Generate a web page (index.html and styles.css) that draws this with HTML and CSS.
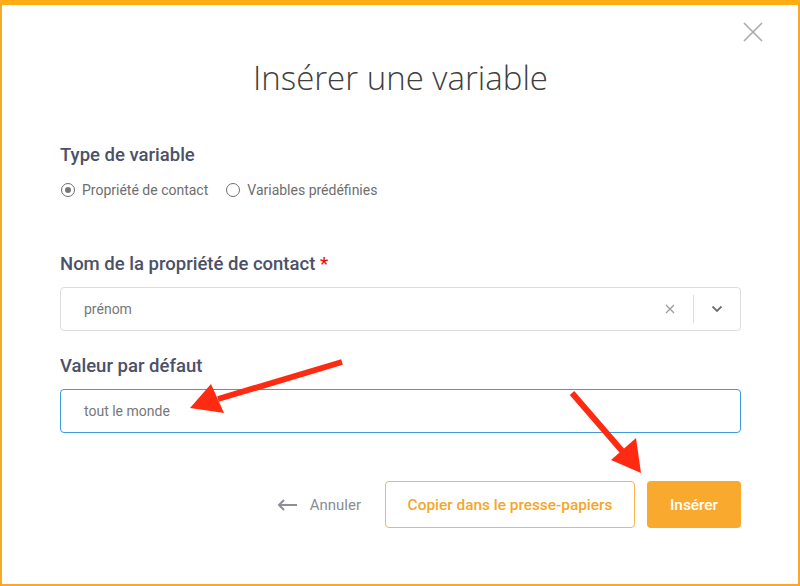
FILE: index.html
```html
<!DOCTYPE html>
<html lang="fr">
<head>
    <meta charset="UTF-8">
    <title>Insérer une variable</title>
    <link rel="stylesheet" href="styles.css">
</head>
<body>
    <div class="modal">
        <button class="close" aria-label="Fermer">
            <svg width="20" height="20" viewBox="0 0 20 20"><path d="M1 1 L19 19 M19 1 L1 19" stroke="#a9a9a9" stroke-width="1.6" fill="none"/></svg>
        </button>

        <h1 class="title">Insérer une variable</h1>

        <div class="label first">Type de variable</div>
        <div class="radios">
            <label class="radio"><span class="dot checked"></span>Propriété de contact</label>
            <label class="radio"><span class="dot"></span>Variables prédéfinies</label>
        </div>

        <div class="label spaced">Nom de la propriété de contact <span class="req">*</span></div>
        <div class="select">
            <span class="select-value">prénom</span>
            <span class="select-clear">
                <svg width="10" height="10" viewBox="0 0 10 10"><path d="M1 1 L9 9 M9 1 L1 9" stroke="#9a9a9a" stroke-width="1.2" fill="none"/></svg>
            </span>
            <span class="select-sep"></span>
            <span class="select-arrow">
                <svg width="12" height="8" viewBox="0 0 12 8"><path d="M1.5 1.5 L6 6 L10.5 1.5" stroke="#6b6f7a" stroke-width="1.8" fill="none"/></svg>
            </span>
        </div>

        <div class="label">Valeur par défaut</div>
        <div class="input">tout le monde</div>

        <div class="actions">
            <button class="cancel">
                <svg width="21" height="12" viewBox="0 0 21 12"><path d="M20 6 H2 M7 1 L2 6 L7 11" stroke="#8d8f96" stroke-width="2" fill="none"/></svg>
                Annuler
            </button>
            <button class="btn-outline">Copier dans le presse-papiers</button>
            <button class="btn-primary">Insérer</button>
        </div>

        <svg class="annotations" width="800" height="586" viewBox="0 0 800 586">
            <path d="M342 362 L218 399" stroke="#ff2a12" stroke-width="6" fill="none"/>
            <polygon points="190,408 211,384 224,413" fill="#ff2a12"/>
            <path d="M572 393 L623 452" stroke="#ff2a12" stroke-width="6" fill="none"/>
            <polygon points="641,473 611,460 636,438" fill="#ff2a12"/>
        </svg>
    </div>
</body>
</html>
```

FILE: styles.css
```css
* {
    box-sizing: border-box;
}
body {
    margin: 0;
    font-family: Roboto, "Liberation Sans", sans-serif;
    background: #fff;
}
.modal {
    position: relative;
    width: 800px;
    height: 586px;
    border: 2px solid #f8a929;
    border-top: 5px solid #ffad14;
    padding: 0 57px 0 58px;
    background: #fff;
}
.close {
    position: absolute;
    top: 17px;
    right: 35px;
    border: none;
    background: none;
    padding: 0;
    width: 20px;
    height: 20px;
}
.title {
    margin: 53px 0 0;
    text-align: center;
    font-family: "Open Sans", sans-serif;
    font-weight: 300;
    font-size: 33px;
    line-height: 40px;
    color: #404040;
}
.label {
    font-size: 18.5px;
    font-weight: 500;
    line-height: 24px;
    color: #4b5168;
    margin-top: 23px;
}
.label.first {
    margin-top: 45px;
}
.label.spaced {
    margin-top: 52px;
}
.req {
    color: #e8120c;
}
.radios {
    display: flex;
    gap: 17px;
    margin-top: 13px;
    height: 20px;
    align-items: center;
}
.radio {
    display: flex;
    align-items: center;
    font-size: 14px;
    color: #6e6e6e;
}
.dot {
    width: 14px;
    height: 14px;
    border: 1.5px solid #6f6f6f;
    border-radius: 50%;
    margin: 0 7px 0 1px;
    position: relative;
}
.dot.checked::after {
    content: "";
    position: absolute;
    left: 2.5px;
    top: 2.5px;
    width: 6px;
    height: 6px;
    border-radius: 50%;
    background: #777;
}
.select {
    margin-top: 11px;
    height: 44px;
    border: 1px solid #dcdde0;
    border-radius: 4px;
    display: flex;
    align-items: center;
    padding-left: 23px;
}
.select-value,
.input {
    font-size: 14px;
    color: #777;
}
.select-value {
    flex: 1;
}
.select-clear {
    display: flex;
    margin-right: 18px;
}
.select-sep {
    width: 1px;
    height: 28px;
    background: #dcdde0;
}
.select-arrow {
    width: 46px;
    display: flex;
    justify-content: center;
}
.input {
    margin-top: 11px;
    height: 44px;
    border: 1px solid #3f9ade;
    border-radius: 4px;
    padding-left: 23px;
    display: flex;
    align-items: center;
}
.actions {
    display: flex;
    justify-content: flex-end;
    align-items: center;
    margin-top: 48px;
}
.actions button {
    font-family: Roboto, sans-serif;
    font-size: 15.4px;
    font-weight: 500;
    cursor: pointer;
}
.cancel {
    display: flex;
    align-items: center;
    gap: 12px;
    border: none;
    background: none;
    color: #8a8c93;
    font-size: 15px !important;
    font-weight: 400 !important;
    padding: 0;
    margin-right: 24px;
}
.btn-outline {
    height: 47px;
    width: 250px;
    border: 1.5px solid #fbb54d;
    border-radius: 4px;
    background: #fff;
    color: #f5a62a;
}
.btn-primary {
    height: 47px;
    width: 94px;
    margin-left: 12px;
    border: none;
    border-radius: 4px;
    background: #f9aa2e;
    color: #fff;
}
.annotations {
    position: absolute;
    left: -2px;
    top: -5px;
    pointer-events: none;
}
```
